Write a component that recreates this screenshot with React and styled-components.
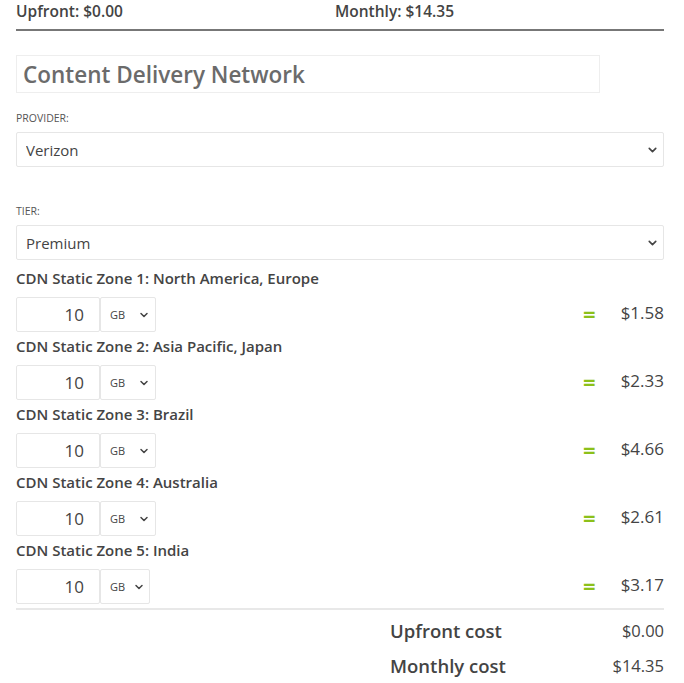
import React from 'react';
import styled, { createGlobalStyle } from 'styled-components';
import { ChevronDown } from 'lucide-react';

const GlobalStyle = createGlobalStyle`
  body {
    margin: 0;
    background: #fff;
    font-family: "Open Sans", "Liberation Sans", sans-serif;
    color: #444;
  }
`;

const Page = styled.div`
  width: 648px;
  padding: 0 20px 0 16px;
`;

const TopBar = styled.div`
  display: grid;
  grid-template-columns: 319px 1fr;
  font-size: 15.5px;
  font-weight: 600;
  line-height: 22px;
  padding-bottom: 7px;
  border-bottom: 2px solid #777;
`;

const Title = styled.div`
  width: 576px;
  margin-top: 24px;
  padding: 2px 0 0 6px;
  height: 34px;
  border: 1px solid #eee;
  font-size: 22.5px;
  font-weight: 600;
  line-height: 34px;
  color: #6b6b6b;
`;

const FieldLabel = styled.div`
  margin-top: ${(p) => p.$top}px;
  margin-bottom: 7px;
  font-size: 10.5px;
  line-height: 14px;
  text-transform: uppercase;
  color: #555;
`;

const SelectWrap = styled.div`
  position: relative;
  width: ${(p) => p.$width || '100%'};
`;

const Select = styled.select`
  appearance: none;
  width: 100%;
  height: 35px;
  margin: 0;
  border: 1px solid #e6e6e6;
  border-radius: 2px;
  background: #fff;
  font-family: inherit;
  font-size: ${(p) => (p.$small ? 11 : 15)}px;
  color: #444;
  padding: 0 9px;
  outline: none;
`;

const Arrow = styled(ChevronDown)`
  position: absolute;
  top: 50%;
  right: ${(p) => p.$right}px;
  transform: translateY(-50%);
  pointer-events: none;
  color: #444;
`;

const ZoneList = styled.div`
  margin-top: 4px;
`;

const ZoneLabel = styled.div`
  height: 33px;
  font-size: 15px;
  font-weight: 600;
  line-height: 28px;
  white-space: nowrap;
`;

const ZoneRow = styled.div`
  display: flex;
  align-items: center;
  height: 35px;
`;

const Amount = styled.input`
  width: 84px;
  height: 35px;
  box-sizing: border-box;
  margin: 0;
  border: 1px solid #e6e6e6;
  border-radius: 2px;
  text-align: right;
  padding-right: 15px;
  font-family: inherit;
  font-size: 17px;
  color: #444;
  outline: none;
`;

const Result = styled.div`
  margin-left: auto;
  display: flex;
  align-items: center;
  gap: 25px;
  padding-bottom: 4px;
`;

const Equals = styled.span`
  font-size: 22px;
  font-weight: 700;
  color: #8cc01a;
  line-height: 1;
`;

const Price = styled.span`
  font-size: 17px;
  color: #444;
`;

const Divider = styled.div`
  margin-top: 4px;
  border-top: 2px solid #e8e8e8;
`;

const Summary = styled.div`
  padding-top: 3px;
`;

const SummaryRow = styled.div`
  display: grid;
  grid-template-columns: 1fr auto;
  height: 35px;
  padding-left: 374px;
  align-items: center;
  font-size: 18.5px;
  font-weight: 600;
  color: #444;
`;

const SummaryValue = styled.span`
  text-align: right;
  font-size: 16.5px;
  font-weight: 400;
`;

const zones = [
  { name: 'CDN Static Zone 1: North America, Europe', price: '$1.58' },
  { name: 'CDN Static Zone 2: Asia Pacific, Japan', price: '$2.33' },
  { name: 'CDN Static Zone 3: Brazil', price: '$4.66' },
  { name: 'CDN Static Zone 4: Australia', price: '$2.61' },
  { name: 'CDN Static Zone 5: India', price: '$3.17', narrow: true },
];

export default function App() {
  return (
    <Page>
      <GlobalStyle />
      <TopBar>
        <span>Upfront: $0.00</span>
        <span>Monthly: $14.35</span>
      </TopBar>
      <Title>Content Delivery Network</Title>

      <FieldLabel $top={18}>Provider:</FieldLabel>
      <SelectWrap>
        <Select defaultValue="verizon">
          <option value="verizon">Verizon</option>
          <option value="akamai">Akamai</option>
        </Select>
        <Arrow size={13} strokeWidth={3} $right={5} />
      </SelectWrap>

      <FieldLabel $top={37}>Tier:</FieldLabel>
      <SelectWrap>
        <Select defaultValue="premium">
          <option value="standard">Standard</option>
          <option value="premium">Premium</option>
        </Select>
        <Arrow size={13} strokeWidth={3} $right={5} />
      </SelectWrap>

      <ZoneList>
        {zones.map((z) => (
          <div key={z.name}>
            <ZoneLabel>{z.name}</ZoneLabel>
            <ZoneRow>
              <Amount defaultValue="10" />
              <SelectWrap $width={z.narrow ? '50px' : '56px'}>
                <Select $small defaultValue="GB">
                  <option value="GB">GB</option>
                  <option value="TB">TB</option>
                </Select>
                <Arrow size={12} strokeWidth={3} $right={z.narrow ? 5 : 6} />
              </SelectWrap>
              <Result>
                <Equals>=</Equals>
                <Price>{z.price}</Price>
              </Result>
            </ZoneRow>
          </div>
        ))}
      </ZoneList>

      <Divider />
      <Summary>
        <SummaryRow>
          <span>Upfront cost</span>
          <SummaryValue>$0.00</SummaryValue>
        </SummaryRow>
        <SummaryRow>
          <span>Monthly cost</span>
          <SummaryValue>$14.35</SummaryValue>
        </SummaryRow>
      </Summary>
    </Page>
  );
}
